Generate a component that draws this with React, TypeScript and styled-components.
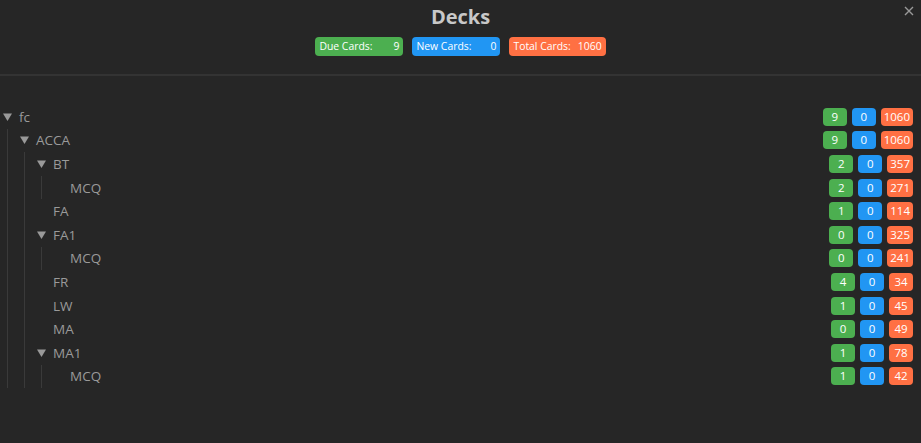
import { createGlobalStyle } from 'styled-components'
import styled from 'styled-components'

const GlobalStyle = createGlobalStyle`
    html, body {
        margin: 0;
        padding: 0;
        background: #262626;
    }
    body {
        font-family: "Open Sans", "Noto Sans", sans-serif;
        color: #999;
        width: 921px;
        height: 443px;
        overflow: hidden;
    }
`

const COLORS = {
    due: '#4caf50',
    fresh: '#2196f3',
    total: '#ff7043',
}

type Kind = keyof typeof COLORS

interface Deck {
    name: string
    due: number
    fresh: number
    total: number
    children?: Deck[]
}

const decks: Deck[] = [
    {
        name: 'fc', due: 9, fresh: 0, total: 1060, children: [
            {
                name: 'ACCA', due: 9, fresh: 0, total: 1060, children: [
                    { name: 'BT', due: 2, fresh: 0, total: 357, children: [
                        { name: 'MCQ', due: 2, fresh: 0, total: 271 },
                    ] },
                    { name: 'FA', due: 1, fresh: 0, total: 114 },
                    { name: 'FA1', due: 0, fresh: 0, total: 325, children: [
                        { name: 'MCQ', due: 0, fresh: 0, total: 241 },
                    ] },
                    { name: 'FR', due: 4, fresh: 0, total: 34 },
                    { name: 'LW', due: 1, fresh: 0, total: 45 },
                    { name: 'MA', due: 0, fresh: 0, total: 49 },
                    { name: 'MA1', due: 1, fresh: 0, total: 78, children: [
                        { name: 'MCQ', due: 1, fresh: 0, total: 42 },
                    ] },
                ],
            },
        ],
    },
]

const Modal = styled.div`
    position: relative;
    width: 921px;
    height: 443px;
    box-sizing: border-box;
`

const CloseButton = styled.div`
    position: absolute;
    top: 6px;
    right: 7px;
    width: 10px;
    height: 10px;
    color: #999;
    svg {
        display: block;
    }
`

const Header = styled.header`
    display: flex;
    flex-direction: column;
    align-items: center;
    padding-top: 3px;
    height: 76px;
    box-sizing: border-box;
    border-bottom: 2px solid #333;
`

const Title = styled.h1`
    margin: 0;
    font-size: 20px;
    line-height: 28px;
    font-weight: 700;
    color: #c8c8c8;
`

const Stats = styled.div`
    display: flex;
    gap: 9px;
    margin-top: 6px;
`

const StatChip = styled.div<{ $kind: Kind }>`
    display: flex;
    justify-content: space-between;
    gap: 7px;
    height: 19px;
    padding: 0 4px;
    border-radius: 4px;
    background: ${p => COLORS[p.$kind]};
    color: #fff;
    font-size: 10.4px;
    line-height: 19px;
    min-width: 80px;
`

const Tree = styled.div`
    padding: 29px 8px 0 0;
`

const Node = styled.div``

const Row = styled.div`
    display: flex;
    align-items: center;
    height: 23.6px;
    padding-left: 3px;
    font-size: 13.5px;
    color: #9a9a9a;
`

const Toggle = styled.span`
    width: 9px;
    height: 9px;
    margin-right: 7px;
    flex: none;
    display: flex;
    align-items: center;
`

const Name = styled.span`
    flex: 1;
`

const Counts = styled.div`
    display: flex;
    gap: 5px;
`

const Badge = styled.span<{ $kind: Kind }>`
    min-width: 24px;
    height: 18px;
    box-sizing: border-box;
    padding: 0 3px;
    border-radius: 4px;
    background: ${p => COLORS[p.$kind]};
    color: #fff;
    font-size: 11.5px;
    line-height: 18px;
    text-align: center;
`

const Children = styled.div`
    margin-left: 7px;
    padding-left: 9px;
    border-left: 1px solid #3a3a3a;
`

const Triangle = () => (
    <svg width="9" height="8" viewBox="0 0 9 8">
        <path d="M0 0.5 L9 0.5 L4.5 8 Z" fill="#999" />
    </svg>
)

const DeckNode = ({ deck }: { deck: Deck }) => (
    <Node>
        <Row>
            <Toggle>{deck.children && <Triangle />}</Toggle>
            <Name>{deck.name}</Name>
            <Counts>
                <Badge $kind="due">{deck.due}</Badge>
                <Badge $kind="fresh">{deck.fresh}</Badge>
                <Badge $kind="total">{deck.total}</Badge>
            </Counts>
        </Row>
        {deck.children &&
            <Children>
                {deck.children.map((child, i) => <DeckNode key={child.name + i} deck={child} />)}
            </Children>
        }
    </Node>
)

export default function App() {
    return (
        <>
            <GlobalStyle />
            <Modal>
                <CloseButton>
                    <svg width="10" height="10" viewBox="0 0 10 10">
                        <path d="M1 1 L9 9 M9 1 L1 9" stroke="#999" strokeWidth="1.4" />
                    </svg>
                </CloseButton>
                <Header>
                    <Title>Decks</Title>
                    <Stats>
                        <StatChip $kind="due"><span>Due Cards:</span><span>9</span></StatChip>
                        <StatChip $kind="fresh"><span>New Cards:</span><span>0</span></StatChip>
                        <StatChip $kind="total"><span>Total Cards:</span><span>1060</span></StatChip>
                    </Stats>
                </Header>
                <Tree>
                    {decks.map(deck => <DeckNode key={deck.name} deck={deck} />)}
                </Tree>
            </Modal>
        </>
    )
}
